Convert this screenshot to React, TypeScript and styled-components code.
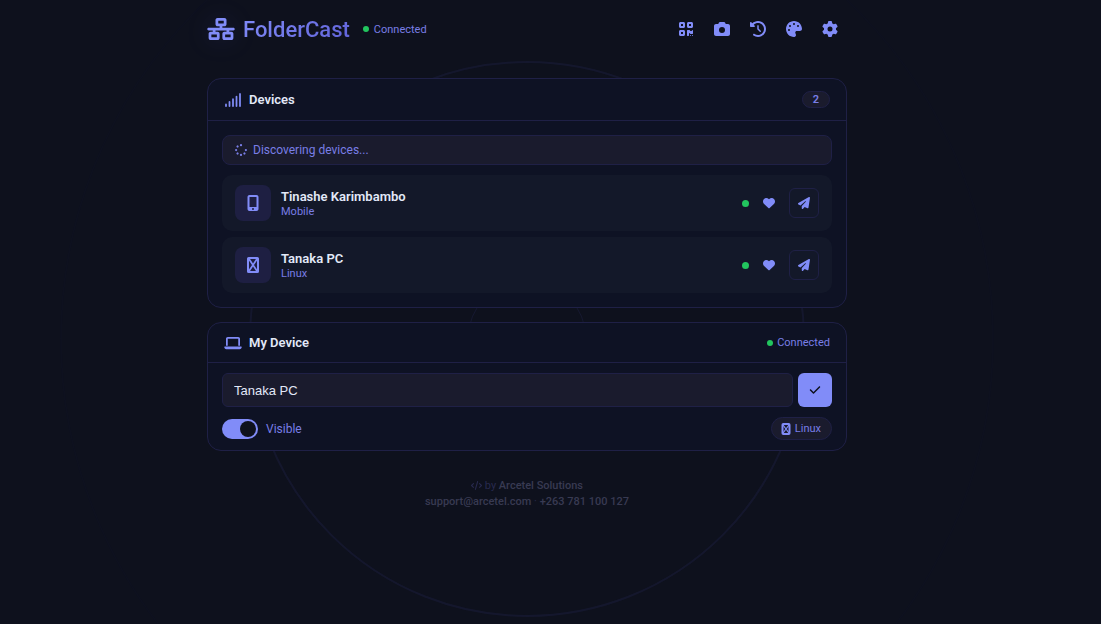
import React, { useState } from "react";
import styled, { createGlobalStyle, css } from "styled-components";
import {
  FaCamera,
  FaCheck,
  FaClockRotateLeft,
  FaCode,
  FaGear,
  FaHeart,
  FaLaptop,
  FaMobileScreenButton,
  FaNetworkWired,
  FaPalette,
  FaPaperPlane,
  FaQrcode,
  FaSignal,
  FaSpinner,
} from "react-icons/fa6";

const color = {
  page: "#0e111d",
  card: "#0e1224",
  row: "#131829",
  field: "#1a1b2d",
  line: "#1f2046",
  tile: "#1e1f42",
  accent: "#818cf8",
  muted: "#797ee6",
  text: "#e2e8f8",
  green: "#22c55e",
  faint: "#383a52",
};

const GlobalStyle = createGlobalStyle`
  * { box-sizing: border-box; }
  body {
    margin: 0;
    background: ${color.page};
    color: ${color.text};
    font-family: Roboto, "Liberation Sans", sans-serif;
    font-size: 13px;
  }
  button { font-family: inherit; }
`;

const Page = styled.div`
  position: relative;
  min-height: 100vh;
  margin-right: 47px;
  padding: 0 16px;
  overflow: hidden;
`;

const Rings = styled.svg`
  position: absolute;
  top: 339px;
  left: 50%;
  width: 940px;
  height: 940px;
  transform: translate(-50%, -50%);
  pointer-events: none;
`;

const Content = styled.div`
  position: relative;
  max-width: 640px;
  margin: 0 auto;
`;

const Header = styled.header`
  display: flex;
  align-items: center;
  justify-content: space-between;
  height: 58px;
  margin-bottom: 20px;
`;

const Brand = styled.div`
  display: flex;
  align-items: center;
  gap: 8px;
`;

const BrandIcon = styled(FaNetworkWired)`
  width: 28px;
  height: 22px;
  color: ${color.accent};
  filter: drop-shadow(0 0 12px rgba(99, 102, 241, 0.15));
`;

const Title = styled.h1`
  margin: 0;
  padding-top: 2px;
  font-size: 22px;
  line-height: 28px;
  font-weight: 500;
  background: linear-gradient(135deg, #818cf8, #6062d8);
  background-clip: text;
  -webkit-background-clip: text;
  color: transparent;
`;

const Status = styled.span`
  display: inline-flex;
  align-items: center;
  gap: 4px;
  font-size: 11px;
  line-height: 15px;
  color: ${color.muted};
`;

const BrandStatus = styled(Status)`
  gap: 5px;
  margin-left: 5px;
`;

const Dot = styled.span<{ $size?: number }>`
  width: ${(p) => p.$size ?? 6}px;
  height: ${(p) => p.$size ?? 6}px;
  border-radius: 50%;
  background: ${color.green};
`;

const Toolbar = styled.nav`
  display: flex;
  gap: 2px;
`;

const IconButton = styled.button`
  display: grid;
  place-items: center;
  width: 34px;
  height: 34px;
  padding: 0;
  border: 0;
  border-radius: 8px;
  background: none;
  color: ${color.accent};
  font-size: 16px;
`;

const Card = styled.section`
  margin-bottom: 14px;
  border: 1px solid ${color.line};
  border-radius: 14px;
  background: ${color.card};
`;

const CardHead = styled.div`
  display: flex;
  align-items: center;
  justify-content: space-between;
  padding: 12px 16px;
  border-bottom: 1px solid ${color.line};
`;

const CardTitle = styled.h2`
  display: flex;
  align-items: center;
  gap: 7px;
  margin: 0;
  font-size: 13px;
  line-height: 15px;
  font-weight: 600;

  svg {
    width: 18px;
    height: 14px;
    color: ${color.accent};
  }
`;

const CardBody = styled.div<{ $tight?: boolean }>`
  padding: ${(p) => (p.$tight ? "10px 14px" : "14px")};
`;

const Count = styled.span`
  padding: 0 10px;
  border: 1px solid ${color.line};
  border-radius: 10px;
  background: ${color.field};
  color: ${color.muted};
  font-size: 11px;
  line-height: 15px;
  font-weight: 600;
`;

const fieldBox = css`
  border: 1px solid ${color.line};
  background: ${color.field};
`;

const Discovering = styled.div`
  ${fieldBox}
  display: flex;
  align-items: center;
  gap: 6px;
  padding: 6px 12px;
  border-radius: 8px;
  color: ${color.muted};
  font-size: 12px;
  line-height: 16px;
`;

const DeviceList = styled.ul`
  display: flex;
  flex-direction: column;
  gap: 6px;
  margin: 10px 0 0;
  padding: 0;
  list-style: none;
`;

const DeviceRow = styled.li`
  display: flex;
  align-items: center;
  gap: 10px;
  padding: 10px 13px;
  border-radius: 10px;
  background: ${color.row};
`;

const DeviceTile = styled.span`
  display: grid;
  place-items: center;
  width: 36px;
  height: 36px;
  border-radius: 8px;
  background: ${color.tile};
  color: ${color.accent};
  font-size: 16px;
`;

const DeviceText = styled.div`
  flex: 1;
  padding-top: 2px;
`;

const DeviceName = styled.div`
  font-size: 13px;
  line-height: 16px;
  font-weight: 600;
`;

const DeviceKind = styled.div`
  color: ${color.muted};
  font-size: 11px;
  line-height: 14px;
`;

const HeartButton = styled(IconButton)`
  width: 20px;
  height: 30px;
  font-size: 12px;
`;

const SendButton = styled(IconButton)`
  width: 30px;
  height: 30px;
  border: 1px solid ${color.line};
  border-radius: 6px;
  font-size: 12px;
`;

const NameForm = styled.form`
  display: flex;
  gap: 5px;
`;

const NameInput = styled.input`
  ${fieldBox}
  flex: 1;
  min-width: 0;
  height: 34px;
  padding: 0 11px;
  border-radius: 6px;
  color: ${color.text};
  font-family: "Liberation Sans", Arial, sans-serif;
  font-size: 13px;
  outline: none;
`;

const SaveButton = styled(IconButton)`
  border-radius: 6px;
  background: ${color.accent};
  color: ${color.page};
  font-size: 12px;
`;

const Options = styled.div`
  display: flex;
  align-items: center;
  justify-content: space-between;
  margin-top: 10px;
`;

const VisibleLabel = styled.label`
  display: flex;
  align-items: center;
  gap: 8px;
  color: ${color.muted};
  font-size: 12px;
  line-height: 16px;
`;

const Toggle = styled.input`
  appearance: none;
  width: 36px;
  height: 20px;
  margin: 0;
  padding: 2px;
  border-radius: 10px;
  background: ${color.line};

  &::before {
    content: "";
    display: block;
    width: 16px;
    height: 16px;
    border-radius: 50%;
    background: ${color.page};
  }

  &:checked {
    background: ${color.accent};
  }

  &:checked::before {
    margin-left: auto;
  }
`;

const Platform = styled.span`
  ${fieldBox}
  display: flex;
  align-items: center;
  gap: 4px;
  padding: 3px 10px 3px 9px;
  border-radius: 12px;
  color: ${color.muted};
  font-size: 11px;
  line-height: 15px;
`;

const Footer = styled.footer`
  padding-top: 13px;
  color: #282a4e;
  font-size: 11px;
  line-height: 16px;
  text-align: center;

  a, strong {
    color: ${color.faint};
    font-weight: 500;
    text-decoration: none;
  }

  svg {
    vertical-align: -2px;
  }
`;

function CrossedBox({ small }: { small?: boolean }) {
  return (
    <svg
      width={small ? 10 : 12}
      height={small ? 12 : 16}
      viewBox={small ? "0 0 10 12" : "0 0 12 16"}
      fill="none"
      stroke={color.accent}
      aria-hidden="true"
    >
      {small ? (
        <>
          <rect x="1.5" y="1" width="7" height="10" rx="0.8" strokeWidth="2" />
          <path d="M2 2L8 10M8 2L2 10" strokeWidth="1.2" />
        </>
      ) : (
        <>
          <rect x="1" y="1" width="10" height="14" rx="0.6" strokeWidth="2" />
          <path d="M2 2L10 14M10 2L2 14" strokeWidth="1.8" />
        </>
      )}
    </svg>
  );
}

const tools = [
  { label: "QR code", Icon: FaQrcode },
  { label: "Camera", Icon: FaCamera },
  { label: "History", Icon: FaClockRotateLeft },
  { label: "Theme", Icon: FaPalette },
  { label: "Settings", Icon: FaGear },
];

const devices = [
  { name: "Tinashe Karimbambo", kind: "Mobile" },
  { name: "Tanaka PC", kind: "Linux" },
];

export default function App() {
  const [name, setName] = useState("Tanaka PC");
  const [visible, setVisible] = useState(true);

  return (
    <>
      <GlobalStyle />
      <Page>
        <Rings viewBox="-470 -470 940 940" fill="none" stroke="#6366f1" aria-hidden="true">
          <circle r="59" strokeOpacity="0.09" strokeWidth="1" />
          <circle r="277" strokeOpacity="0.08" strokeWidth="2" />
          <circle r="466" strokeOpacity="0.012" strokeWidth="2" />
        </Rings>
        <Content>
          <Header>
            <Brand>
              <BrandIcon />
              <Title>FolderCast</Title>
              <BrandStatus>
                <Dot />
                Connected
              </BrandStatus>
            </Brand>
            <Toolbar>
              {tools.map(({ label, Icon }) => (
                <IconButton key={label} type="button" aria-label={label}>
                  <Icon />
                </IconButton>
              ))}
            </Toolbar>
          </Header>

          <Card>
            <CardHead>
              <CardTitle>
                <FaSignal />
                Devices
              </CardTitle>
              <Count>{devices.length}</Count>
            </CardHead>
            <CardBody>
              <Discovering role="status">
                <FaSpinner />
                Discovering devices...
              </Discovering>
              <DeviceList>
                {devices.map((device) => (
                  <DeviceRow key={device.name}>
                    <DeviceTile>
                      {device.kind === "Mobile" ? <FaMobileScreenButton /> : <CrossedBox />}
                    </DeviceTile>
                    <DeviceText>
                      <DeviceName>{device.name}</DeviceName>
                      <DeviceKind>{device.kind}</DeviceKind>
                    </DeviceText>
                    <Dot $size={7} />
                    <HeartButton type="button" aria-label={`Favourite ${device.name}`}>
                      <FaHeart />
                    </HeartButton>
                    <SendButton type="button" aria-label={`Send to ${device.name}`}>
                      <FaPaperPlane />
                    </SendButton>
                  </DeviceRow>
                ))}
              </DeviceList>
            </CardBody>
          </Card>

          <Card>
            <CardHead>
              <CardTitle>
                <FaLaptop />
                My Device
              </CardTitle>
              <Status>
                <Dot />
                Connected
              </Status>
            </CardHead>
            <CardBody $tight>
              <NameForm onSubmit={(e) => e.preventDefault()}>
                <NameInput aria-label="Device name" value={name} onChange={(e) => setName(e.target.value)} />
                <SaveButton type="submit" aria-label="Save name">
                  <FaCheck />
                </SaveButton>
              </NameForm>
              <Options>
                <VisibleLabel>
                  <Toggle type="checkbox" checked={visible} onChange={(e) => setVisible(e.target.checked)} />
                  Visible
                </VisibleLabel>
                <Platform>
                  <CrossedBox small />
                  Linux
                </Platform>
              </Options>
            </CardBody>
          </Card>

          <Footer>
            <div>
              <FaCode /> by <strong>Arcetel Solutions</strong>
            </div>
            <div>
              <a href="mailto:support@arcetel.com">support@arcetel.com</a> ·{" "}
              <a href="tel:+263781100127">+263 781 100 127</a>
            </div>
          </Footer>
        </Content>
      </Page>
    </>
  );
}
